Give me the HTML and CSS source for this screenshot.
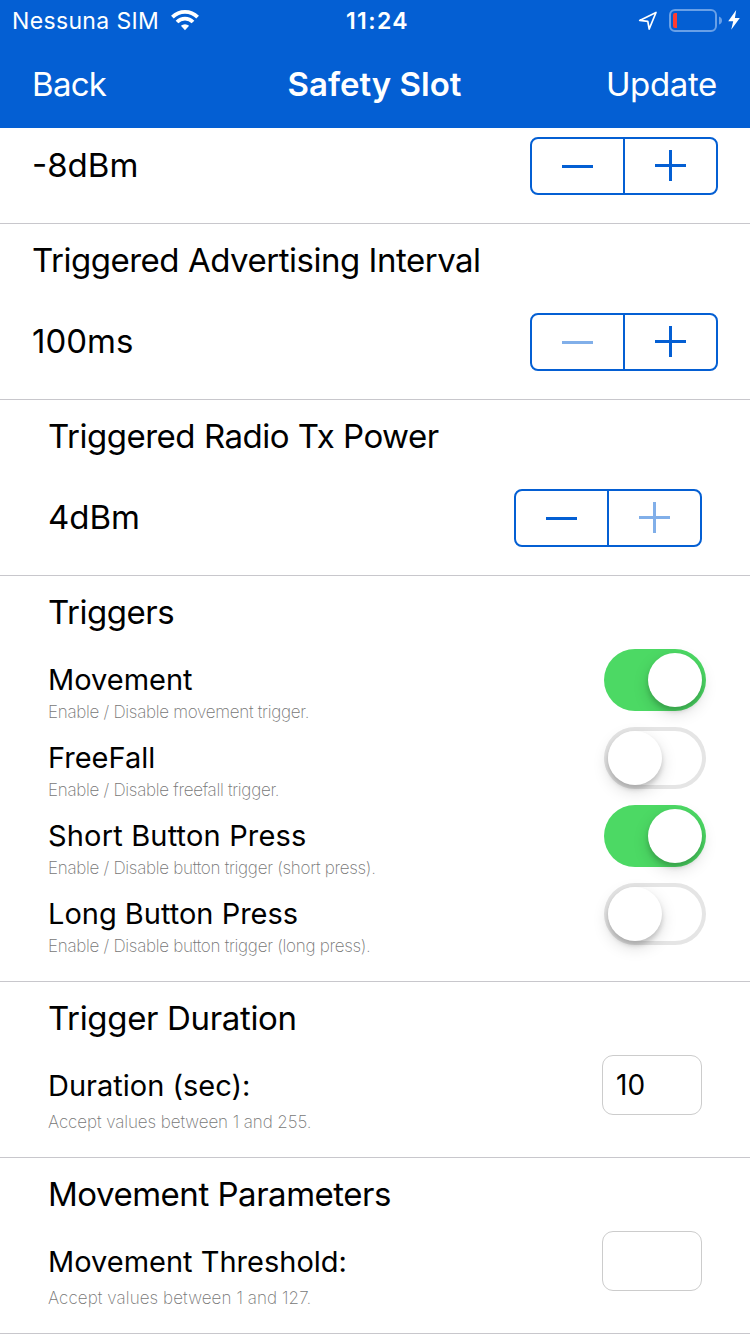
FILE: index.html
```html
<!DOCTYPE html>
<html lang="en">
<head>
<meta charset="utf-8">
<title>Safety Slot</title>
<link rel="stylesheet" href="styles.css">
</head>
<body>
<header class="header">
  <div class="status">
    <div class="carrier">
      <span class="carrier-name">Nessuna SIM</span>
      <svg class="wifi" width="28" height="21" viewBox="0 0 28 21">
        <g fill="none" stroke="#fff" stroke-width="3.8">
          <path d="M1.4 7.2a17.8 17.8 0 0 1 25.2 0"/>
          <path d="M6 12a11.3 11.3 0 0 1 16 0"/>
        </g>
        <path d="M14 20.2l-4.1-4.4a6 6 0 0 1 8.2 0z" fill="#fff"/>
      </svg>
    </div>
    <span class="clock">11:24</span>
    <div class="indicators">
      <svg class="location" width="20" height="20" viewBox="0 0 20 20"><path d="M1.700 9.400L18 1.500 11.200 18 9.800 10.300z" fill="none" stroke="#fff" stroke-width="1.7" stroke-linejoin="round"/></svg>
      <svg class="battery" width="54" height="23" viewBox="0 0 54 23">
        <rect x="1" y="1" width="46" height="21" rx="5" fill="none" stroke="#69a0e7" stroke-width="2"/>
        <path d="M50 7.5q3 1 3 4t-3 4z" fill="#69a0e7"/>
        <path d="M6 4h2v15H6q-2 0-2-2V6q0-2 2-2z" fill="#ff3b30"/>
      </svg>
      <svg class="bolt" width="12" height="20" viewBox="0 0 12 20"><path d="M8.200 0L.200 11.200H5.200L3.200 19.800 11.800 8H6.900z" fill="#fff"/></svg>
    </div>
  </div>
  <nav class="nav">
    <span class="nav-back">Back</span>
    <span class="nav-title">Safety Slot</span>
    <span class="nav-update">Update</span>
  </nav>
</header>
<main>
  <section class="cell cell-clipped">
    <div class="row"><span class="value">-8dBm</span>
      <div class="stepper"><div class="step"><i class="minus"></i></div><div class="step"><i class="plus"></i></div></div></div>
  </section>
  <section class="cell">
    <h2 class="title">Triggered Advertising Interval</h2>
    <div class="row"><span class="value">100ms</span>
      <div class="stepper"><div class="step"><i class="minus disabled"></i></div><div class="step"><i class="plus"></i></div></div></div>
  </section>
  <section class="cell inset">
    <h2 class="title">Triggered Radio Tx Power</h2>
    <div class="row"><span class="value">4dBm</span>
      <div class="stepper"><div class="step"><i class="minus"></i></div><div class="step"><i class="plus disabled"></i></div></div></div>
  </section>
  <section class="cell inset triggers">
    <h2 class="title">Triggers</h2>
    <div class="trigger"><div><div class="label">Movement</div><div class="hint">Enable / Disable movement trigger.</div></div><div class="switch on"><i class="knob"></i></div></div>
    <div class="trigger"><div><div class="label">FreeFall</div><div class="hint">Enable / Disable freefall trigger.</div></div><div class="switch"><i class="knob"></i></div></div>
    <div class="trigger"><div><div class="label label-wide">Short Button Press</div><div class="hint">Enable / Disable button trigger (short press).</div></div><div class="switch on"><i class="knob"></i></div></div>
    <div class="trigger"><div><div class="label">Long Button Press</div><div class="hint">Enable / Disable button trigger (long press).</div></div><div class="switch"><i class="knob"></i></div></div>
  </section>
  <section class="cell inset duration">
    <h2 class="title">Trigger Duration</h2>
    <div class="field"><div><div class="label">Duration (sec):</div><div class="hint">Accept values between 1 and 255.</div></div><div class="input">10</div></div>
  </section>
  <section class="cell inset threshold">
    <h2 class="title">Movement Parameters</h2>
    <div class="field"><div><div class="label">Movement Threshold:</div><div class="hint">Accept values between 1 and 127.</div></div><div class="input"></div></div>
  </section>
</main>
</body>
</html>
```

FILE: styles.css
```css
* { box-sizing: border-box; }
body { margin: 0; width: 750px; height: 1334px; overflow: hidden; background: #fff; color: #000; font-family: Inter, "Liberation Sans", sans-serif; white-space: nowrap; }
svg { display: block; }
.header { height: 128px; background: #045fd3; color: #fff; }
.status { height: 40px; display: grid; grid-template-columns: 1fr auto 1fr; align-items: center; padding: 2px 10px 0 12px; }
.carrier { display: flex; align-items: center; gap: 12px; font-size: 23px; letter-spacing: 0.35px; line-height: 38px; }
.wifi { margin-top: -2px; }
.clock { margin-left: 3px; font-size: 23px; font-weight: 600; letter-spacing: 1.4px; }
.indicators { display: flex; justify-content: flex-end; align-items: center; }
.battery { margin: -2px 0 0 11px; }
.bolt { margin: -2px 0 0 5px; }
.nav { height: 88px; display: grid; grid-template-columns: 1fr auto 1fr; align-items: center; padding: 0 33px 0 32px; font-size: 33px; line-height: 88px; }
.nav-back { letter-spacing: -0.7px; }
.nav-title { font-weight: 600; }
.nav-update { text-align: right; letter-spacing: -0.35px; }
.cell { height: 176px; padding: 0 32px; border-bottom: 1px solid #c8c7cc; }
.cell-clipped { height: 96px; padding-top: 9px; }
.inset { padding: 0 48px; }
.title { margin: 0; height: 89px; font-size: 33px; font-weight: 400; line-height: 72px; letter-spacing: -0.48px; }
.row { display: flex; justify-content: space-between; align-items: flex-start; }
.value { font-size: 33px; line-height: 56px; }
.stepper { width: 188px; height: 58px; display: grid; grid-template-columns: 91px 93px; border: 2px solid #045fd3; border-radius: 8px; }
.step { padding: 11px 0 0 30px; }
.step + .step { border-left: 2px solid #045fd3; }
.minus, .plus { display: block; width: 31px; height: 31px; color: #045fd3; background: linear-gradient(currentColor, currentColor) 0 14px / 31px 3px no-repeat; }
.minus { margin-top: 1px; }
.plus { background: linear-gradient(currentColor, currentColor) 0 14px / 31px 3px no-repeat, linear-gradient(currentColor, currentColor) 14px 0 / 3px 31px no-repeat; }
.minus.disabled, .plus.disabled { color: #81afe9; }
.triggers { height: 406px; }
.triggers .title { height: 73px; }
.trigger { height: 78px; display: flex; justify-content: space-between; margin-right: -4px; }
.label { height: 47px; font-size: 29px; line-height: 62px; }
.label-wide { letter-spacing: 0.17px; }
.hint { font-size: 17px; line-height: 32px; font-weight: 200; color: #777; letter-spacing: -0.29px; }
.switch { width: 102px; height: 62px; padding: 4px; border-radius: 31px; box-shadow: inset 0 0 0 4px #e5e5e5; }
.switch.on { background: #4cd964; box-shadow: none; }
.knob { display: block; width: 54px; height: 54px; border-radius: 50%; background: #fff; box-shadow: 0 6px 16px rgba(0,0,0,.15), 0 4px 5px rgba(0,0,0,.16); }
.on .knob { margin-left: 40px; }
.duration .title { letter-spacing: -0.34px; }
.duration .hint { letter-spacing: -0.09px; }
.threshold .hint { letter-spacing: 0.08px; }
.field { display: flex; justify-content: space-between; margin-top: -16px; }
.field .label { height: 51px; }
.input { width: 100px; height: 60px; padding-left: 13px; border: 1px solid #ccc; border-radius: 11px; font-size: 28px; line-height: 58px; }
```
